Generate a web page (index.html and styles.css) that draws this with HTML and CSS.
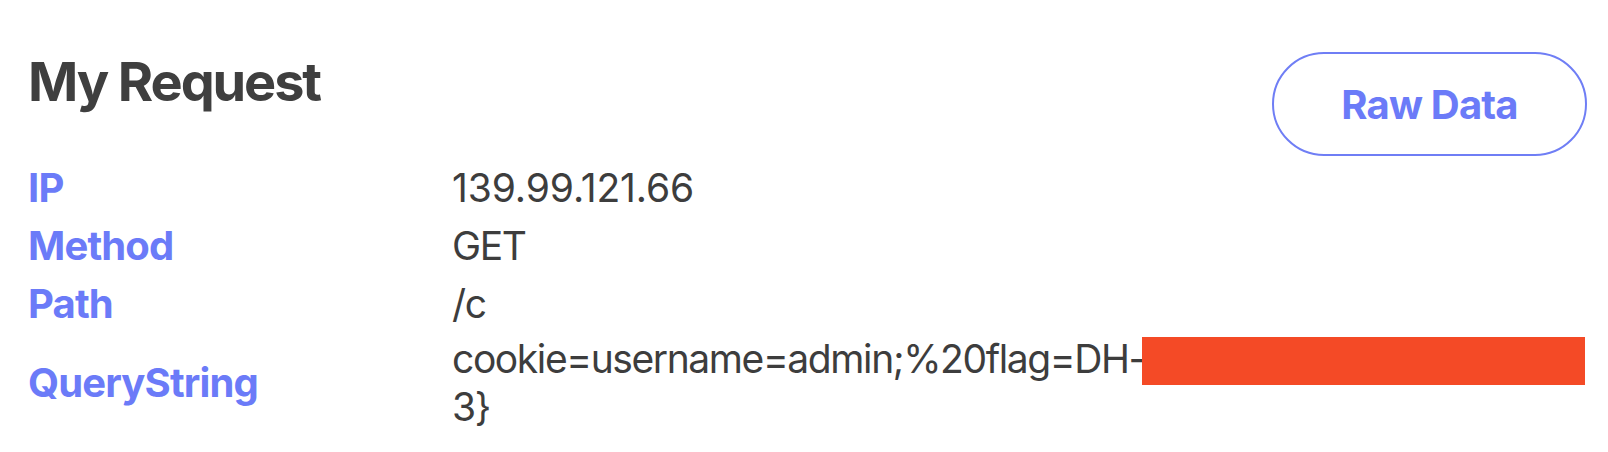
FILE: index.html
```html
<!DOCTYPE html>
<html lang="en">
<head>
<meta charset="utf-8">
<title>My Request</title>
<link rel="stylesheet" href="styles.css">
</head>
<body>
<main class="page">
  <header class="header">
    <h1 class="title">My Request</h1>
    <button class="raw-btn" type="button">Raw Data</button>
  </header>
  <dl class="info">
    <div class="row">
      <dt class="label">IP</dt>
      <dd class="value value-num">139.99.121.66</dd>
    </div>
    <div class="row">
      <dt class="label">Method</dt>
      <dd class="value">GET</dd>
    </div>
    <div class="row">
      <dt class="label">Path</dt>
      <dd class="value">/c</dd>
    </div>
    <div class="row">
      <dt class="label">QueryString</dt>
      <dd class="value">cookie=username=admin;%20flag=DH-<span class="redacted"></span><br>3}</dd>
    </div>
  </dl>
</main>
</body>
</html>
```
FILE: styles.css
```css
html, body {
  margin: 0;
  padding: 0;
  background: #ffffff;
}

body {
  font-family: Inter, "Noto Sans", "Liberation Sans", sans-serif;
  color: #3d3d3d;
}

.page {
  padding: 50px 0 0 28px;
}

.header {
  display: flex;
  justify-content: space-between;
  align-items: flex-start;
  padding-right: 21px;
}

.title {
  margin: 0;
  font-size: 54px;
  line-height: 64px;
  font-weight: 700;
  color: #3f3f3f;
  letter-spacing: -2.1px;
}

.raw-btn {
  margin-top: 2px;
  width: 315px;
  height: 104px;
  border: 2px solid #6f7ef5;
  border-radius: 52px;
  background: #fff;
  color: #6b7bf8;
  font-family: inherit;
  font-size: 40px;
  font-weight: 700;
  letter-spacing: -0.8px;
  padding: 0;
  cursor: pointer;
}

.info {
  margin: 3px 0 0 0;
}

.row {
  display: grid;
  grid-template-columns: 424px 1fr;
  align-items: center;
  padding: 2px 0;
}

.label {
  margin: 0;
  font-size: 40px;
  line-height: 54px;
  font-weight: 700;
  letter-spacing: -0.85px;
  color: #6b7bf8;
}

.value {
  margin: 0;
  font-size: 39px;
  line-height: 48px;
  font-weight: 400;
  letter-spacing: -1.4px;
  color: #3d3d3d;
  white-space: nowrap;
}

.value-num {
  letter-spacing: -0.1px;
}

.redacted {
  display: inline-block;
  width: 443px;
  height: 48px;
  vertical-align: top;
  margin-left: -3px;
  background: #f44a26;
  position: relative;
  top: 2px;
}
```
